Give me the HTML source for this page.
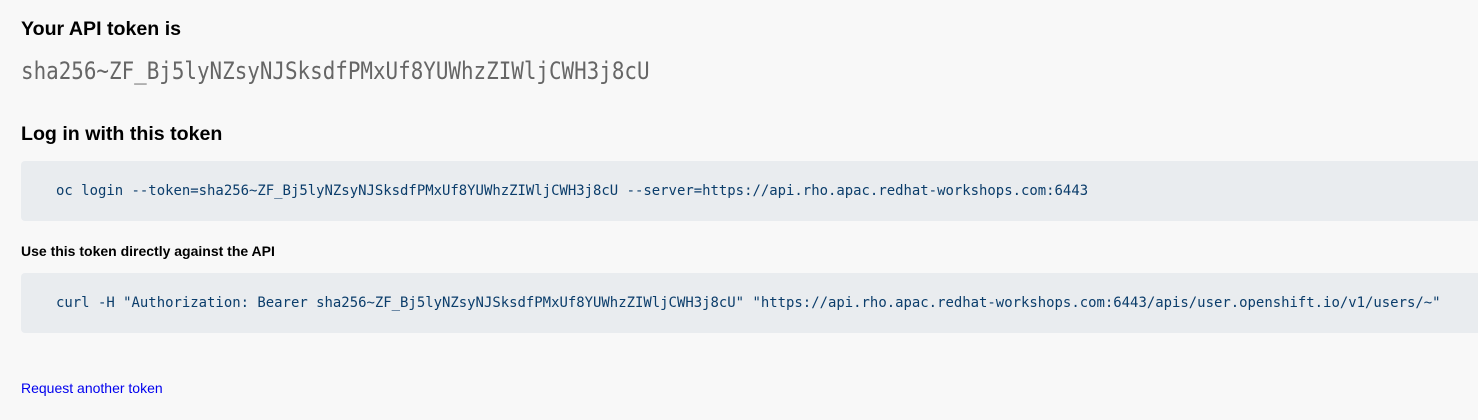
<!DOCTYPE html>
<html><head><meta charset="utf-8"><style>
body{margin:0;background:#f8f8f8;width:1478px;height:420px;overflow:hidden;font-family:"Liberation Sans",sans-serif;color:#000}
.a{position:absolute;left:21px;white-space:nowrap}
h2{margin:0;font-size:19.6px;font-weight:bold}
.tok{font-family:"DejaVu Sans Mono",monospace;font-size:24px;color:#666;transform:scaleX(0.87);transform-origin:0 0}
.box{position:absolute;left:21px;width:1470px;height:60px;background:#e9ecef;border-radius:4px}
.box span{position:absolute;left:35px;top:22px;font-family:"DejaVu Sans Mono",monospace;font-size:13.95px;color:#0b3d6b;white-space:nowrap}
</style></head><body>
<h2 class="a" style="top:18px">Your API token is</h2>
<div class="a tok" style="top:57px">sha256~ZF_Bj5lyNZsyNJSksdfPMxUf8YUWhzZIWljCWH3j8cU</div>
<h2 class="a" style="top:123px">Log in with this token</h2>
<div class="box" style="top:161px"><span>oc login --token=sha256~ZF_Bj5lyNZsyNJSksdfPMxUf8YUWhzZIWljCWH3j8cU --server=https://api.rho.apac.redhat-workshops.com:6443</span></div>
<div class="a" style="top:243px;font-size:14px;font-weight:bold">Use this token directly against the API</div>
<div class="box" style="top:273px"><span>curl -H "Authorization: Bearer sha256~ZF_Bj5lyNZsyNJSksdfPMxUf8YUWhzZIWljCWH3j8cU" "https://api.rho.apac.redhat-workshops.com:6443/apis/user.openshift.io/v1/users/~"</span></div>
<div class="a" style="top:380px;font-size:14px;color:#0000ee">Request another token</div>
</body></html>
